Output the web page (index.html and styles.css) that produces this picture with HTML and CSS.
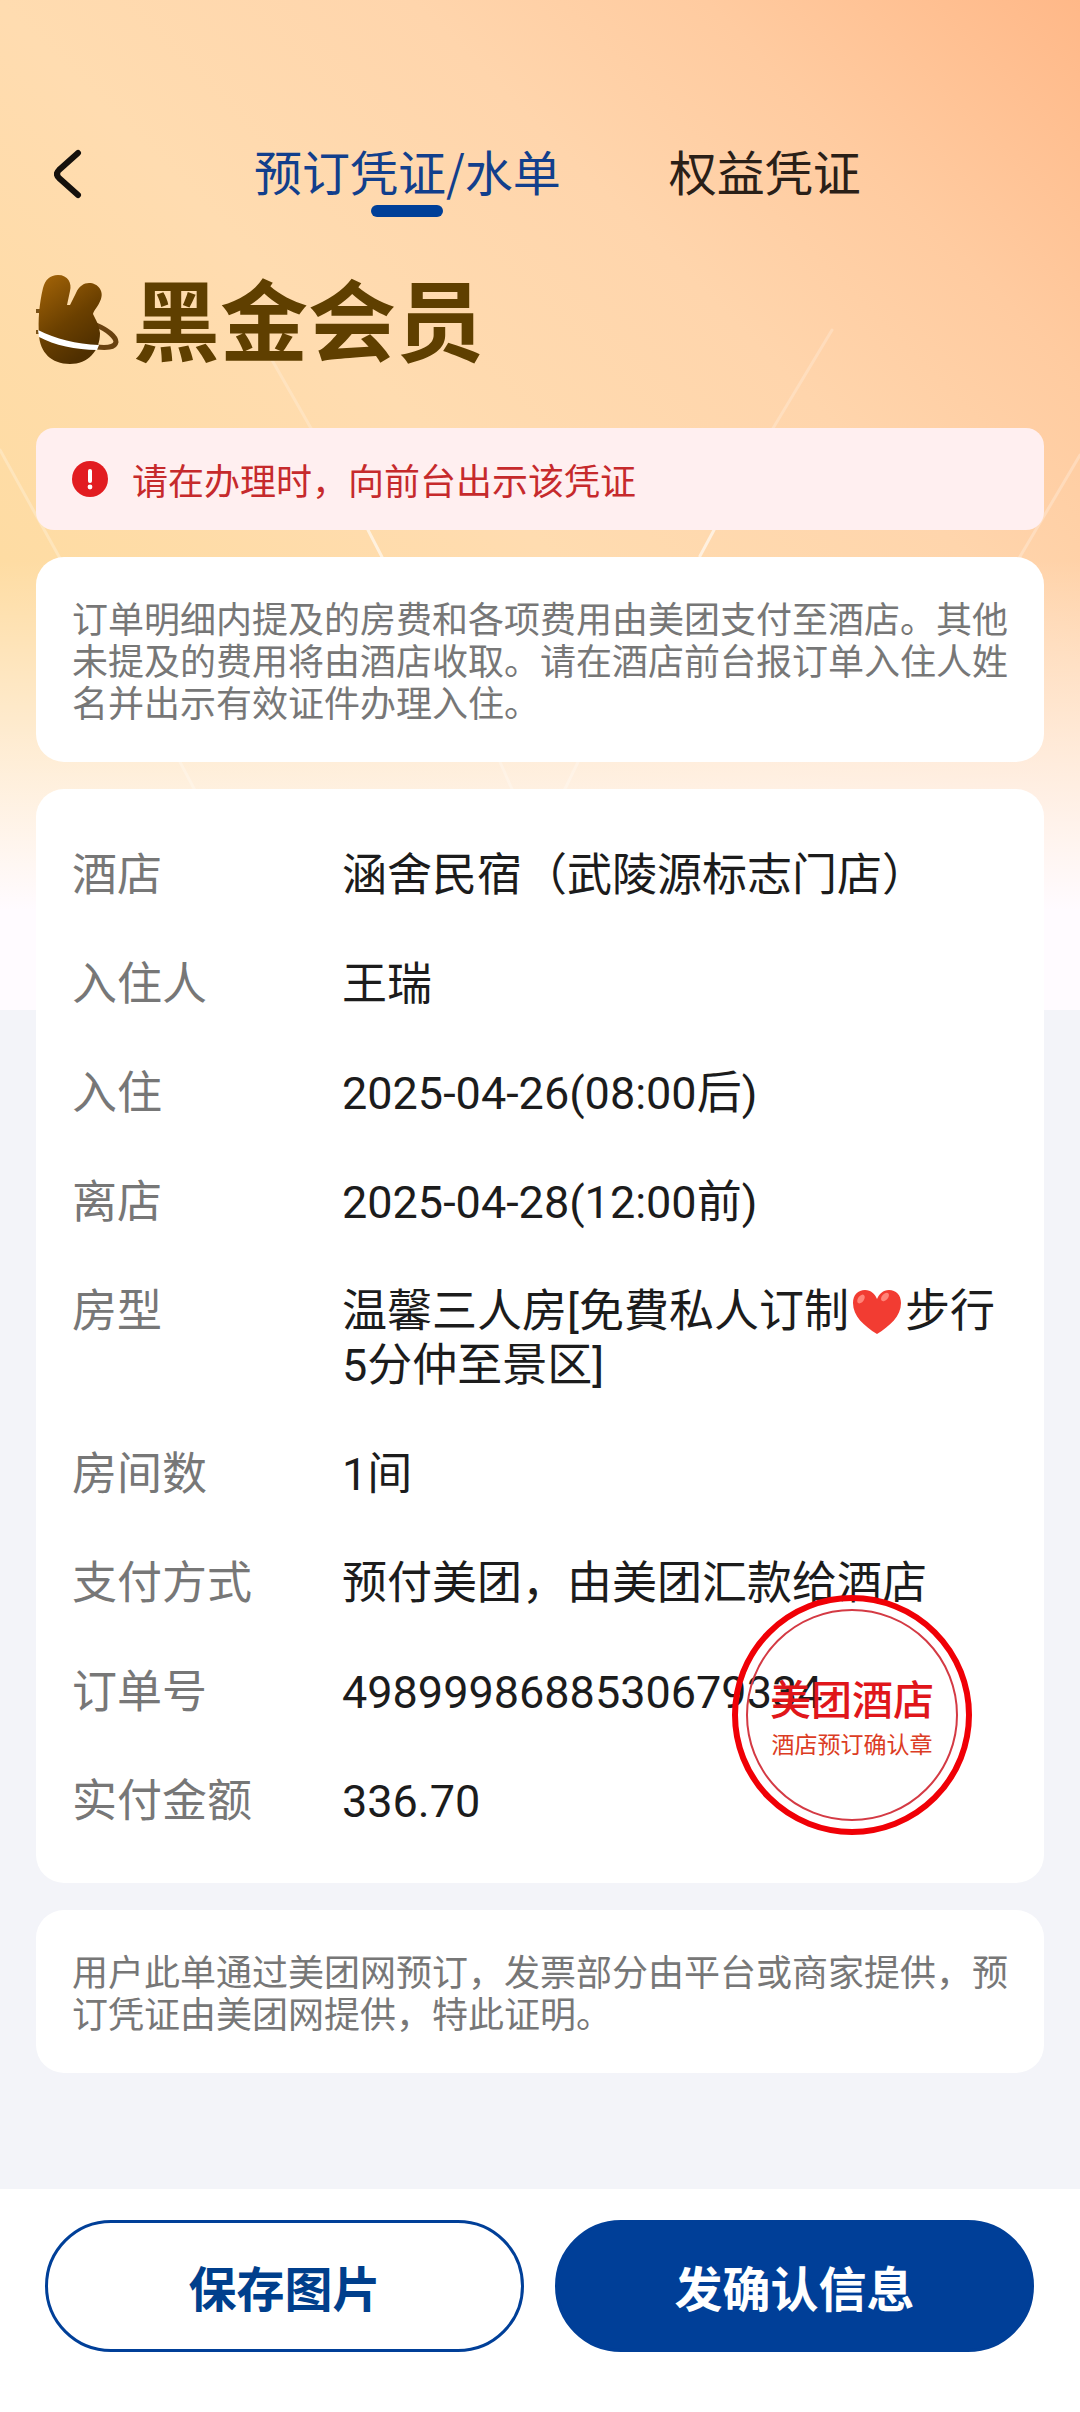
FILE: index.html
```html
<!DOCTYPE html>
<html lang="zh-CN">
<head>
<meta charset="utf-8">
<meta name="viewport" content="width=device-width, initial-scale=1">
<title>预订凭证/水单</title>
<link rel="stylesheet" href="styles.css">
</head>
<body>
<div class="page">
  <svg class="rays" viewBox="0 0 1080 1010" preserveAspectRatio="none" aria-hidden="true">
    <g fill="none" stroke="#fff" stroke-width="3" stroke-linecap="round">
      <path d="M832 330 772 430M272 360 312 430" opacity=".22"/>
      <path d="M714 530 700 556M368 530 382 557" opacity=".6"/>
      <path d="M0 450 72 580M1080 455 1018 560" opacity=".25"/>
      <path d="M500 762 530 830M578 762 545 830M180 762 200 800" opacity=".25"/>
    </g>
  </svg>

  <header class="topbar">
    <button class="back" type="button" aria-label="返回">
      <svg viewBox="0 0 28 50" width="28" height="50" aria-hidden="true"><path d="M24 4 5 21Q1 25 5 29L24 46" fill="none" stroke="#15110d" stroke-width="6" stroke-linecap="round"/></svg>
    </button>
    <nav class="tabs">
      <a class="tab tab-active" href="#booking">预订凭证/水单</a>
      <a class="tab" href="#benefits">权益凭证</a>
    </nav>
  </header>

  <main class="content" id="booking">
    <h1 class="member">
      <svg class="member-icon" viewBox="0 0 84 90" width="84" height="90" aria-hidden="true">
        <defs>
          <linearGradient id="fur" x1="0" y1="0" x2=".5" y2="1">
            <stop offset="0" stop-color="#a56508"/>
            <stop offset=".6" stop-color="#6b4000"/>
            <stop offset="1" stop-color="#4f2f00"/>
          </linearGradient>
        </defs>
        <path d="M0 36H4M0 57H4" stroke="#7a5218" stroke-width="4"/>
        <path d="M60 50C72 55 80 62 80 67 79 73 70 73 60 72" fill="none" stroke="#6a4210" stroke-width="5"/>
        <path d="M22 0C32 0 36 8 34 16L31 30H34L40 18C43 11 48 8 53 8 62 8 68 16 65 24 62 32 58 35 57 39 60 45 63 50 64 58 64 76 52 89 34 89 15 89 4 77 3 60 2 45 3 30 7 13 9 5 14 0 22 0Z" fill="url(#fur)"/>
        <path d="M2 55C20 64 40 69 63 70L61 75C40 75 18 70 3 62Z" fill="#fff"/>
      </svg>
      <span>黑金会员</span>
    </h1>

    <p class="alert" role="alert">
      <svg viewBox="0 0 36 36" width="36" height="36" aria-hidden="true"><circle cx="18" cy="18" r="18" fill="#e21c20"/><path d="M18 10V20" stroke="#fff" stroke-width="4" stroke-linecap="round"/><circle cx="18" cy="26" r="2.4" fill="#fff"/></svg>
      <span>请在办理时，向前台出示该凭证</span>
    </p>

    <p class="card note">订单明细内提及的房费和各项费用由美团支付至酒店。其他未提及的费用将由酒店收取。请在酒店前台报订单入住人姓名并出示有效证件办理入住。</p>

    <section class="card order">
      <dl class="details">
        <dt>酒店</dt><dd>涵舍民宿（武陵源标志门店）</dd>
        <dt>入住人</dt><dd>王瑞</dd>
        <dt>入住</dt><dd>2025-04-26(08:00后)</dd>
        <dt>离店</dt><dd>2025-04-28(12:00前)</dd>
        <dt>房型</dt><dd>温馨三人房[免費私人订制<svg class="heart" viewBox="0 0 50 46" width="50" height="46" role="img" aria-label="红心"><path d="M25 45C12 37 1 27 1 14 1 6 6 1 13 1 19 1 23 5 25 10 27 5 31 1 37 1 44 1 49 6 49 14 49 27 38 37 25 45Z" fill="#f23c32"/><ellipse cx="9" cy="10" rx="3" ry="5" transform="rotate(35 9 10)" fill="#ff8478"/><ellipse cx="33" cy="8" rx="3" ry="5" transform="rotate(40 33 8)" fill="#ff8478"/></svg>步行5分仲至景区]</dd>
        <dt>房间数</dt><dd>1间</dd>
        <dt>支付方式</dt><dd>预付美团，由美团汇款给酒店</dd>
        <dt>订单号</dt><dd>4989998688530679334</dd>
        <dt>实付金额</dt><dd>336.70</dd>
      </dl>
      <div class="stamp">
        <strong class="stamp-name">美团酒店</strong>
        <span class="stamp-text">酒店预订确认章</span>
      </div>
    </section>

    <p class="card note">用户此单通过美团网预订，发票部分由平台或商家提供，预订凭证由美团网提供，特此证明。</p>
  </main>

  <footer class="actions">
    <button class="btn btn-outline" type="button">保存图片</button>
    <button class="btn btn-solid" type="button">发确认信息</button>
  </footer>
</div>
</body>
</html>
```
FILE: styles.css
```css
* {
  box-sizing: border-box;
}

body {
  margin: 0;
  background: #f3f4f9;
  color: #1c1c1c;
  font-family: "Noto Sans CJK SC", sans-serif;
}

h1,
p,
dl,
dd {
  margin: 0;
}

.page {
  position: relative;
  display: flex;
  flex-direction: column;
  min-height: 100vh;
  background:
    linear-gradient(180deg, rgba(255, 251, 255, 0) 560px, #fffbff 910px) 0 0 / 100% 1010px no-repeat,
    linear-gradient(45deg, #fedca2 20%, #ffdcb0 48%, #ffd5ac 68%, #ffcba0 82%, #ffb888 100%) 0 0 / 100% 1010px no-repeat,
    #f3f4f9;
}

/* Light streaks over the warm backdrop */
.rays {
  position: absolute;
  top: 0;
  left: 0;
  width: 100%;
  height: 1010px;
  pointer-events: none;
}

.topbar {
  position: relative;
  display: flex;
  align-items: center;
  height: 92px;
  margin-top: 128px;
  padding-left: 54px;
}

.back {
  display: flex;
  padding: 0;
  border: 0;
  background: none;
}

.tabs {
  display: flex;
  gap: 108px;
  margin-left: 172px;
}

.tab {
  position: relative;
  padding-bottom: 8px;
  color: #2a2018;
  font-size: 48px;
  line-height: 78px;
  text-decoration: none;
}

.tab-active {
  color: #123f8c;
}

.tab-active::after {
  content: "";
  position: absolute;
  bottom: 0;
  left: 50%;
  width: 72px;
  height: 12px;
  margin-left: -36px;
  border-radius: 6px;
  background: #003f98;
}

.content {
  position: relative;
  display: flex;
  flex: 1;
  flex-direction: column;
  gap: 27px;
  padding: 40px 36px 116px;
}

.member {
  display: flex;
  align-items: center;
  gap: 12px;
  height: 120px;
  margin-bottom: 21px;
  color: #5f3f00;
  font-size: 88px;
  font-weight: 700;
  line-height: 112px;
}

.member span {
  padding-bottom: 8px;
}

.alert {
  display: flex;
  align-items: center;
  gap: 24px;
  padding: 24px 36px;
  border-radius: 18px;
  background: #ffeff0;
  color: #c62a2c;
  font-size: 36px;
  line-height: 54px;
}

.card {
  border-radius: 28px;
  background: #fff;
}

.note {
  padding: 39px 36px 40px;
  color: #777;
  font-size: 36px;
  line-height: 42px;
}

.order {
  position: relative;
  padding: 60px 36px 54px;
}

.details {
  display: grid;
  grid-template-columns: 270px 1fr;
  row-gap: 55px;
  font-family: Roboto, "Noto Sans CJK SC", sans-serif;
  font-size: 45px;
  line-height: 54px;
}

.details dt {
  color: #777;
}

.heart {
  margin: 0 3px;
  vertical-align: -8px;
}

.stamp {
  position: absolute;
  right: 72px;
  bottom: 48px;
  display: flex;
  flex-direction: column;
  align-items: center;
  justify-content: center;
  width: 240px;
  height: 240px;
  padding-top: 8px;
  border: 6px solid #f00006;
  border-radius: 50%;
  color: #e0161a;
}

.stamp::before {
  content: "";
  position: absolute;
  inset: 8px;
  border: 2px solid #d43a44;
  border-radius: 50%;
}

.stamp-name {
  font-size: 41px;
  font-weight: 500;
  line-height: 48px;
}

.stamp-text {
  color: #dc3c24;
  font-size: 23px;
  line-height: 44px;
}

.actions {
  display: flex;
  gap: 31px;
  padding: 31px 46px 60px 45px;
  background: #fff;
}

.btn {
  flex: 1;
  height: 132px;
  padding: 0;
  border: 3px solid #003f98;
  border-radius: 66px;
  font-family: inherit;
  font-size: 48px;
  font-weight: 700;
}

.btn-outline {
  background: #fff;
  color: #003f8c;
}

.btn-solid {
  background: #003f98;
  color: #fff;
}
```
